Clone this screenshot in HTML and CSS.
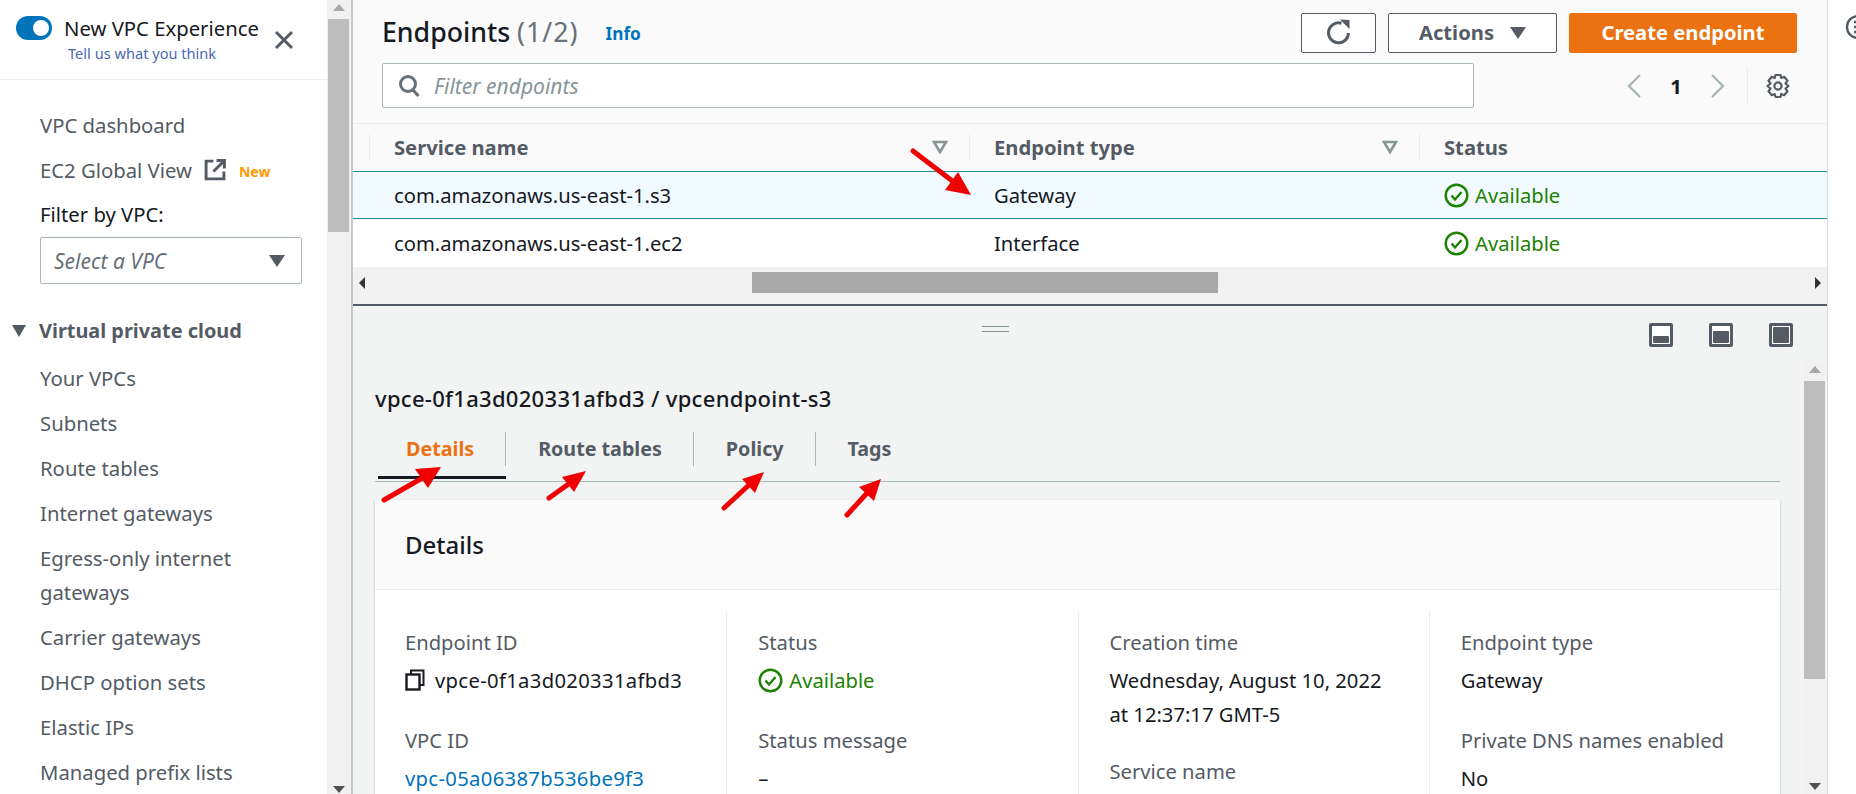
FILE: index.html
```html
<!DOCTYPE html>
<html lang="en">
  <head>
    <meta charset="UTF-8" />
    <title>Endpoints | VPC Console</title>
    <link rel="stylesheet" href="styles.css">
  </head>
  <body>
    <div class="page">
      <aside class="sidebar">
        <div class="exp-bar">
          <span class="toggle"><span class="toggle-knob"></span></span>
          <div class="exp-text">
            <div class="exp-title">New VPC Experience</div>
            <a class="exp-link">Tell us what you think</a>
          </div>
          <svg class="exp-close" width="20" height="20" viewBox="0 0 20 20"><path d="M2 2 L18 18 M18 2 L2 18" stroke="#545b64" stroke-width="3" fill="none"/></svg>
        </div>
        <nav class="nav-top">
          <a class="nav-link">VPC dashboard</a>
          <a class="nav-link">EC2 Global View
            <svg class="ext-icon" width="22" height="22" viewBox="0 0 21 21"><path d="M9 2 H2 V19 H19 V12 M12 1.500 H19.500 V9 M19 2 L9 12" stroke="#545b64" stroke-width="2.800" fill="none"/></svg>
            <span class="new-tag">New</span>
          </a>
          <div class="filter-label">Filter by VPC:</div>
          <div class="vpc-select">
            <span>Select a VPC</span>
            <span class="caret caret-select"></span>
          </div>
        </nav>
        <div class="nav-group"><span class="caret caret-group"></span>Virtual private cloud</div>
        <nav class="nav-list">
          <a class="nav-item">Your VPCs</a>
          <a class="nav-item">Subnets</a>
          <a class="nav-item">Route tables</a>
          <a class="nav-item">Internet gateways</a>
          <a class="nav-item">Egress-only internet gateways</a>
          <a class="nav-item">Carrier gateways</a>
          <a class="nav-item">DHCP option sets</a>
          <a class="nav-item">Elastic IPs</a>
          <a class="nav-item">Managed prefix lists</a>
        </nav>
      </aside>

      <div class="side-scroll">
        <span class="sb-up"></span>
        <div class="side-thumb"></div>
        <span class="sb-down side-down"></span>
      </div>

      <main class="main">
        <section class="list-head">
          <div class="head-row">
            <h1 class="list-title">Endpoints <span class="count">(1/2)</span></h1>
            <a class="info-link">Info</a>
            <div class="actions">
              <button class="btn btn-icon">
                <svg width="26" height="26" viewBox="0 0 26 26"><path d="M22.500 14 A10 10 0 1 1 15.500 4.300" stroke="#545b64" stroke-width="3" fill="none"/><path d="M14 0.500 L23.500 1 V10 Z" fill="#545b64"/></svg>
              </button>
              <button class="btn btn-actions">Actions <span class="caret caret-btn"></span></button>
              <button class="btn btn-primary">Create endpoint</button>
            </div>
          </div>
          <div class="filter-row">
            <div class="filter-box">
              <svg width="22" height="24" viewBox="0 0 22 24"><circle cx="10" cy="10" r="7.500" stroke="#687078" stroke-width="3" fill="none"/><path d="M15 16 L20.500 22" stroke="#687078" stroke-width="3" fill="none"/></svg>
              <span>Filter endpoints</span>
            </div>
            <div class="pager">
              <svg width="15" height="26" viewBox="0 0 15 26"><path d="M13 2 L2 13 L13 24" stroke="#aab7b8" stroke-width="2.400" fill="none"/></svg>
              <span class="page-num">1</span>
              <svg width="15" height="26" viewBox="0 0 15 26"><path d="M2 2 L13 13 L2 24" stroke="#aab7b8" stroke-width="2.400" fill="none"/></svg>
            </div>
            <div class="gear-wrap">
              <svg width="24" height="26" viewBox="0 0 24 26"><path d="M9.500 2 H14.500 L15.300 5 L18.200 3.800 L21.500 7.700 L19.500 10.500 L22.500 13 L19.500 15.500 L21.500 18.300 L18.200 22.200 L15.300 21 L14.500 24 H9.500 L8.700 21 L5.800 22.200 L2.500 18.300 L4.500 15.500 L1.500 13 L4.500 10.500 L2.500 7.700 L5.800 3.800 L8.700 5 Z" stroke="#545b64" stroke-width="2.200" stroke-linejoin="round" fill="none"/><circle cx="12" cy="13" r="3.600" stroke="#545b64" stroke-width="2.200" fill="none"/></svg>
            </div>
          </div>
        </section>

        <div class="table">
          <div class="row row-head">
            <div class="cell cell-first"><span class="divider"></span>Service name
              <svg class="sort-mark" width="16" height="14" viewBox="0 0 16 14"><path d="M2 2 H14 L8 12 Z" stroke="#879596" stroke-width="2.600" fill="none"/></svg>
            </div>
            <div class="cell"><span class="divider"></span>Endpoint type
              <svg class="sort-mark" width="16" height="14" viewBox="0 0 16 14"><path d="M2 2 H14 L8 12 Z" stroke="#879596" stroke-width="2.600" fill="none"/></svg>
            </div>
            <div class="cell"><span class="divider"></span>Status</div>
          </div>
          <div class="row row-selected">
            <div class="cell cell-first">com.amazonaws.us-east-1.s3</div>
            <div class="cell">Gateway</div>
            <div class="cell status-ok">
              <svg width="25" height="25" viewBox="0 0 25 25"><circle cx="12.500" cy="12.500" r="10.800" stroke="#1d8102" stroke-width="2.400" fill="none"/><path d="M7.500 12.500 L11 16.500 L17.500 9" stroke="#1d8102" stroke-width="2.400" fill="none"/></svg>
              Available
            </div>
          </div>
          <div class="row">
            <div class="cell cell-first">com.amazonaws.us-east-1.ec2</div>
            <div class="cell">Interface</div>
            <div class="cell status-ok">
              <svg width="25" height="25" viewBox="0 0 25 25"><circle cx="12.500" cy="12.500" r="10.800" stroke="#1d8102" stroke-width="2.400" fill="none"/><path d="M7.500 12.500 L11 16.500 L17.500 9" stroke="#1d8102" stroke-width="2.400" fill="none"/></svg>
              Available
            </div>
          </div>
        </div>

        <div class="h-scroll">
          <span class="sb-left"></span>
          <div class="h-thumb"></div>
          <span class="sb-right"></span>
        </div>

        <section class="panel">
          <div class="panel-tools">
            <span class="drag-handle"></span>
            <div class="win-icons">
              <span class="win-icon"><span class="win-fill fill-small"></span></span>
              <span class="win-icon"><span class="win-fill fill-mid"></span></span>
              <span class="win-icon"><span class="win-fill fill-full"></span></span>
            </div>
          </div>
          <div class="panel-body">
            <div class="panel-content">
              <h2 class="detail-title">vpce-0f1a3d020331afbd3 / vpcendpoint-s3</h2>
              <div class="tabs">
                <div class="tab tab-active"><span class="tab-label tab-first">Details</span></div>
                <div class="tab"><span class="tab-label">Route tables</span></div>
                <div class="tab"><span class="tab-label">Policy</span></div>
                <div class="tab"><span class="tab-label tab-last">Tags</span></div>
              </div>
              <div class="card">
                <div class="card-head">Details</div>
                <div class="card-grid">
                  <div class="col">
                    <div class="field-label">Endpoint ID</div>
                    <div class="field-value value-icon copy-value">
                      <svg width="20" height="22" viewBox="0 0 20 22"><path d="M6 5 V1.500 H18.500 V16 H15" stroke="#16191f" stroke-width="2" fill="none"/><rect x="1.500" y="5.500" width="13" height="15" stroke="#16191f" stroke-width="2.400" fill="none"/></svg>
                      <span class="id-text">vpce-0f1a3d020331afbd3</span>
                    </div>
                    <div class="field-label">VPC ID</div>
                    <div class="field-value"><a class="link id-text">vpc-05a06387b536be9f3</a></div>
                  </div>
                  <div class="col">
                    <div class="field-label">Status</div>
                    <div class="field-value value-icon status-ok">
                      <svg width="25" height="25" viewBox="0 0 25 25"><circle cx="12.500" cy="12.500" r="10.800" stroke="#1d8102" stroke-width="2.400" fill="none"/><path d="M7.500 12.500 L11 16.500 L17.500 9" stroke="#1d8102" stroke-width="2.400" fill="none"/></svg>
                      Available
                    </div>
                    <div class="field-label">Status message</div>
                    <div class="field-value">–</div>
                  </div>
                  <div class="col">
                    <div class="field-label">Creation time</div>
                    <div class="field-value">Wednesday, August 10, 2022<br>at 12:37:17 GMT-5</div>
                    <div class="field-label label-tight">Service name</div>
                  </div>
                  <div class="col">
                    <div class="field-label">Endpoint type</div>
                    <div class="field-value">Gateway</div>
                    <div class="field-label">Private DNS names enabled</div>
                    <div class="field-value">No</div>
                  </div>
                </div>
              </div>
            </div>
            <div class="panel-scroll">
              <span class="sb-up panel-up"></span>
              <div class="panel-thumb"></div>
              <span class="sb-down panel-down"></span>
            </div>
          </div>
        </section>
      </main>

      <div class="edge">
        <svg width="11" height="28" viewBox="0 0 11 28"><circle cx="13" cy="14" r="11" stroke="#545b64" stroke-width="2.400" fill="none"/><path d="M9 9 H11 M9 14 H11 M9 19 H11" stroke="#545b64" stroke-width="2.400"/></svg>
      </div>
    </div>

    <!-- red annotation arrows drawn on top of the screenshot -->
    <svg class="arrows" width="1856" height="794" viewBox="0 0 1856 794">
      <g stroke="#f00000" stroke-width="5" stroke-linecap="round" fill="#f00000">
        <path d="M913 151 L955 183"/>
        <path d="M384 500 L424 477"/>
        <path d="M549 498 L570 483"/>
        <path d="M724 508 L750 484"/>
        <path d="M847 515 L868 492"/>
      </g>
      <g fill="#f00000">
        <polygon points="971,195 945,190 958,172"/>
        <polygon points="441,467 428,488 415,469"/>
        <polygon points="586,471 574,492 562,477"/>
        <polygon points="764,472 755,493 742,479"/>
        <polygon points="881,479 874,501 859,487"/>
      </g>
    </svg>
  </body>
</html>
```

FILE: styles.css
```css
* {
  box-sizing: border-box;
}
body {
  margin: 0;
  background: white;
  color: #16191f;
  font-family: "Noto Sans", Roboto, sans-serif;
  font-size: 20.200px;
  overflow: hidden;
}
a {
  text-decoration: none;
}
.page {
  display: flex;
  height: 794px;
  overflow: hidden;
}

/* sidebar */
.sidebar {
  width: 327px;
  flex: none;
  background: white;
  color: #545b64;
  font-size: 20.300px;
}
.exp-bar {
  display: flex;
  height: 80px;
  padding: 16px 0 0 16px;
  border-bottom: 1px solid #eaeded;
}
.toggle {
  width: 36px;
  height: 24px;
  flex: none;
  border-radius: 12px;
  background: #0073bb;
  display: flex;
  align-items: center;
  justify-content: flex-end;
  padding-right: 3px;
}
.toggle-knob {
  width: 16px;
  height: 16px;
  border-radius: 50%;
  background: white;
}
.exp-text {
  margin-left: 12px;
  width: 210px;
  white-space: nowrap;
}
.exp-title {
  color: #16191f;
  line-height: 24px;
}
.exp-link {
  display: block;
  margin: 3px 0 0 4px;
  color: #4a69b5;
  font-size: 14.600px;
  line-height: 20px;
}
.exp-close {
  margin-top: 14px;
}
.nav-top {
  padding: 22px 25px 0 40px;
}
.nav-link {
  display: flex;
  align-items: center;
  height: 45px;
}
.ext-icon {
  margin-left: 12px;
}
.new-tag {
  margin-left: 13px;
  margin-top: 3px;
  color: #ff9900;
  font-size: 14px;
  font-weight: 700;
}
.filter-label {
  color: #16191f;
  line-height: 34px;
  margin-top: 5px;
}
.vpc-select {
  display: flex;
  align-items: center;
  justify-content: space-between;
  height: 47px;
  margin-top: 6px;
  padding: 0 16px 0 13px;
  border: 1px solid #aab7b8;
  border-radius: 2px;
  font-size: 21px;
  font-style: italic;
  color: #687078;
}
.caret {
  display: inline-block;
  width: 0;
  height: 0;
  border-left: 8px solid transparent;
  border-right: 8px solid transparent;
  border-top: 12px solid #545b64;
}
.nav-group {
  display: flex;
  align-items: center;
  margin-top: 30px;
  padding-left: 12px;
  font-size: 19.900px;
  font-weight: 700;
  line-height: 34px;
}
.caret-group {
  border-left-width: 7px;
  border-right-width: 7px;
  margin-right: 13px;
}
.nav-list {
  margin-top: 13px;
  padding: 0 25px 0 40px;
}
.nav-item {
  display: block;
  line-height: 34px;
  margin-bottom: 11px;
}

/* scrollbars */
.side-scroll {
  width: 26px;
  flex: none;
  display: flex;
  flex-direction: column;
  align-items: center;
  background: #f1f1f1;
  border-right: 2px solid #c8c8c8;
  padding-right: 1px;
}
.sb-up,
.sb-down,
.sb-left,
.sb-right {
  width: 0;
  height: 0;
  border: 6px solid transparent;
  flex: none;
}
.sb-up {
  border-top: 0;
  border-bottom: 7px solid #a8a8a8;
  margin-top: 4px;
}
.sb-down {
  border-bottom: 0;
  border-top: 7px solid #505050;
}
.side-thumb {
  width: 21px;
  height: 213px;
  margin-top: 8px;
  background: #bdbdbd;
}
.side-down {
  margin-top: auto;
  margin-bottom: 1px;
}

/* top list */
.main {
  width: 1475px;
  flex: none;
  display: flex;
  flex-direction: column;
  border-right: 1px solid #d5dbdb;
}
.list-head {
  height: 124px;
  padding: 13px 30px 0 29px;
  background: #fafafa;
  border-bottom: 1px solid #eaeded;
}
.head-row {
  display: flex;
  align-items: center;
  height: 40px;
}
.list-title {
  margin: 0 0 2px;
  font-size: 26.700px;
  font-weight: 500;
  line-height: 38px;
}
.count {
  color: #687078;
  font-weight: 400;
  letter-spacing: 1px;
}
.info-link {
  margin-left: 27px;
  color: #0073bb;
  font-size: 17.200px;
  font-weight: 700;
}
.actions {
  display: flex;
  gap: 12px;
  margin-left: auto;
}
.btn {
  height: 40px;
  border: 1px solid #545b64;
  border-radius: 2px;
  background: white;
  color: #545b64;
  font-family: inherit;
  font-size: 20.200px;
  font-weight: 700;
  padding: 0 0 2px;
  display: flex;
  align-items: center;
  justify-content: center;
}
.btn-icon {
  width: 75px;
}
.btn-actions {
  width: 169px;
}
.caret-btn {
  margin-left: 16px;
  margin-top: 2px;
}
.btn-primary {
  width: 228px;
  background: #ec7211;
  border-color: #ec7211;
  color: white;
}
.filter-row {
  display: flex;
  align-items: center;
  margin-top: 10px;
}
.filter-box {
  display: flex;
  align-items: center;
  gap: 14px;
  width: 1092px;
  height: 45px;
  padding-left: 15px;
  background: white;
  border: 1px solid #aab7b8;
  border-radius: 2px;
  color: #879596;
  font-size: 21px;
  font-style: italic;
}
.pager {
  display: flex;
  align-items: center;
  width: 98px;
  margin-left: 153px;
}
.page-num {
  width: 68px;
  text-align: center;
  font-weight: 700;
}
.gear-wrap {
  display: flex;
  align-items: center;
  height: 38px;
  margin-left: 22px;
  padding-left: 18px;
  border-left: 1px solid #eaeded;
}

/* table */
.row {
  display: grid;
  grid-template-columns: 616px 450px 1fr;
  height: 47px;
  background: white;
}
.row-head {
  background: #fafafa;
  color: #545b64;
  font-weight: 700;
}
.row-head .cell {
  padding-bottom: 2px;
}
.row-selected {
  background: #f1faff;
  border-top: 1px solid #1b90a5;
  border-bottom: 1px solid #1b90a5;
  height: 48px;
}
.row-selected + .row {
  height: 48px;
}
.cell {
  display: flex;
  align-items: center;
  gap: 6px;
  padding-left: 25px;
}
.cell-first {
  padding-left: 41px;
}
.divider {
  width: 1px;
  height: 26px;
  background: #eaeded;
  margin-left: -25px;
  margin-right: 18px;
}
.sort-mark {
  margin-left: auto;
  margin-right: 21px;
}
.status-ok {
  color: #1d8102;
}
.h-scroll {
  display: flex;
  align-items: center;
  height: 39px;
  padding: 0 6px 6px;
  background: #f1f1f1;
  border-bottom: 2px solid #545b64;
}
.sb-left {
  border-left: 0;
  border-right: 6px solid #333;
}
.sb-right {
  border-right: 0;
  border-left: 6px solid #333;
  margin-left: auto;
}
.h-thumb {
  width: 466px;
  height: 21px;
  margin-left: 387px;
  background: #a8a8a8;
}

/* details panel */
.panel {
  flex: 1;
  min-height: 0;
  background: #f2f3f3;
  display: flex;
  flex-direction: column;
}
.panel-tools {
  display: flex;
  height: 55px;
  flex: none;
  padding: 17px 34px 0 629px;
}
.drag-handle {
  width: 27px;
  height: 6px;
  margin-top: 3px;
  border-top: 1.500px solid #879596;
  border-bottom: 1.500px solid #879596;
}
.win-icons {
  display: flex;
  gap: 36px;
  margin-left: auto;
}
.win-icon {
  width: 24px;
  height: 24px;
  border: 3px solid #545b64;
  border-radius: 2px;
  display: flex;
  align-items: flex-end;
  padding: 1px;
  background: white;
}
.win-fill {
  width: 100%;
  background: #545b64;
  border-radius: 1px;
}
.fill-small {
  height: 7px;
}
.fill-mid {
  height: 12px;
}
.fill-full {
  height: 100%;
}
.panel-body {
  display: flex;
  flex: 1;
  min-height: 0;
  padding-left: 22px;
}
.panel-content {
  width: 1405px;
  flex: none;
  padding-top: 24px;
}
.detail-title {
  margin: 0;
  font-size: 22px;
  font-weight: 500;
  letter-spacing: 0.300px;
  line-height: 26px;
}
.tabs {
  display: flex;
  height: 53px;
  margin-top: 18px;
  padding: 0 0 0 3px;
  border-bottom: 1px solid #aab7b8;
}
.tab {
  height: 50px;
  padding-top: 3px;
  color: #545b64;
  font-size: 19.700px;
  font-weight: 700;
}
.tab-active {
  color: #ec7211;
  border-bottom: 3px solid #16191f;
}
.tab-label {
  display: block;
  height: 34px;
  line-height: 34px;
  padding: 0 31px 0 32px;
  border-right: 1px solid #aab7b8;
}
.tab-first {
  padding-left: 28px;
}
.tab-last {
  border-right: 0;
}
.card {
  margin-top: 18px;
  background: white;
  box-shadow: 0 1px 2px rgba(0, 28, 36, 0.3);
}
.card-head {
  height: 90px;
  padding: 29px 0 0 30px;
  background: #fafafa;
  border-bottom: 1px solid #eaeded;
  font-size: 24px;
  font-weight: 500;
  line-height: 32px;
}
.card-grid {
  display: grid;
  grid-template-columns: repeat(4, 1fr);
  margin-top: 22px;
}
.col {
  padding: 18px 0 0 31px;
  border-left: 1px solid #eaeded;
}
.col:first-child {
  padding-left: 30px;
  border-left: 0;
}
.field-label {
  color: #545b64;
  line-height: 24px;
}
.field-value {
  line-height: 34px;
  margin: 9px 0 31px;
}
.value-icon {
  display: flex;
  align-items: center;
  gap: 6px;
}
.copy-value {
  gap: 10px;
}
.id-text {
  letter-spacing: 0.350px;
}
.label-tight {
  margin-top: -3px;
}
.link {
  color: #0073bb;
}
.panel-scroll {
  width: 21px;
  margin-left: 24px;
  flex: none;
  display: flex;
  flex-direction: column;
  align-items: center;
  background: #f1f1f1;
}
.panel-up {
  margin-top: 5px;
}
.panel-thumb {
  width: 21px;
  height: 298px;
  margin-top: 8px;
  background: #bdbdbd;
}
.panel-down {
  margin-top: auto;
  margin-bottom: 4px;
}

/* right edge and annotations */
.edge {
  flex: 1;
  padding-top: 13px;
  display: flex;
  justify-content: flex-end;
  align-items: flex-start;
}
.arrows {
  position: absolute;
  left: 0;
  top: 0;
  pointer-events: none;
}
```
